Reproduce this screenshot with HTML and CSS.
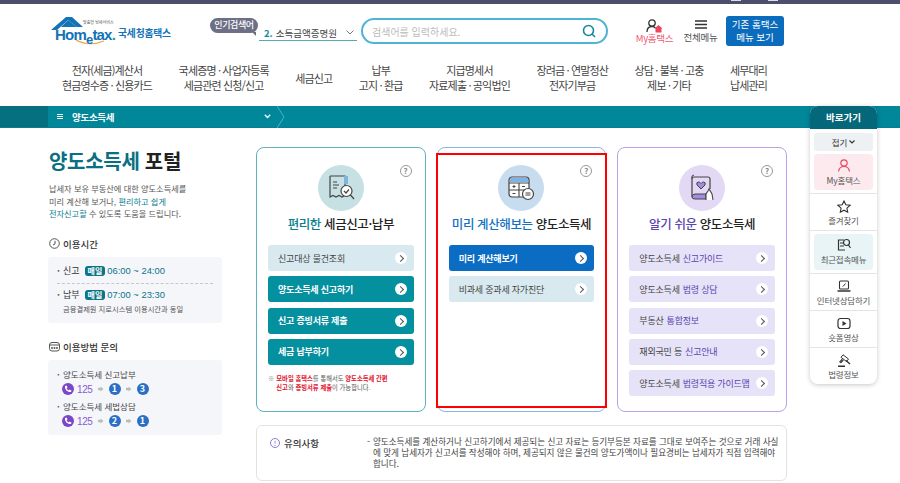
FILE: index.html
```html
<!DOCTYPE html>
<html lang="ko">
<head>
  <meta charset="UTF-8" />
  <title>양도소득세 포털</title>
  <link rel="stylesheet" href="styles.css">
</head>
<body>

<div class="topbar"><i></i><i></i></div>

<!-- 헤더 -->
<div class="header">
  <div class="head-row">
    <div class="logo">
      <svg class="logo-roof" width="32" height="16" viewBox="0 0 32 16"><path d="M0 13 L15 0 L21 0 L32 10 L26 10 L17 3 L6 13 Z" fill="#1273b9"/><path d="M17 3 L26 10 L10 10 Z" fill="#1273b9"/></svg>
      <svg class="logo-smile" width="30" height="7" viewBox="0 0 30 7"><path d="M1 1 Q14 8 29 2" fill="none" stroke="#f0a23c" stroke-width="1.2"/></svg>
      <span class="logo-sub">맞춤형 납세서비스</span>
      <span class="logo-en">Hom<em>e</em>tax<b>.</b></span>
      <span class="logo-ko">국세청홈택스</span>
    </div>
    <div class="hot">인기검색어</div>
    <div class="rolling"><b>2.</b> 소득금액증명원
      <svg width="8" height="5" viewBox="0 0 8 5"><path d="M.5 .5 L4 4 L7.5 .5" fill="none" stroke="#777" stroke-width="1"/></svg>
    </div>
    <div class="search">
      <span>검색어를 입력하세요.</span>
      <svg width="14" height="14" viewBox="0 0 14 14"><circle cx="6.5" cy="6.5" r="5" fill="none" stroke="#12899c" stroke-width="1.6"/><path d="M10 10 L13 13" stroke="#12899c" stroke-width="1.6"/></svg>
    </div>
    <div class="head-link my">
      <svg width="17" height="14" viewBox="0 0 17 14"><circle cx="6" cy="4" r="3.2" fill="none" stroke="#333" stroke-width="1.3"/><path d="M1 13 C1 9 3 7.5 6 7.5 C7.5 7.5 8.5 8 9.5 9" fill="none" stroke="#333" stroke-width="1.3"/><path d="M8.5 9.5 L12.5 6 L16.5 9.5 L15.5 9.5 L15.5 13.5 L9.5 13.5 L9.5 9.5 Z" fill="#e8475f"/></svg>
      <span>My홈택스</span>
    </div>
    <div class="head-link all">
      <svg width="12" height="9" viewBox="0 0 12 9"><path d="M0 1 H12 M0 4.5 H12 M0 8 H12" stroke="#333" stroke-width="1.3"/></svg>
      <span>전체메뉴</span>
    </div>
    <div class="old-btn">기존 홈택스<br>메뉴 보기</div>
  </div>
  <div class="nav">
    <a>전자(세금)계산서<br>현금영수증 · 신용카드</a>
    <a>국세증명 · 사업자등록<br>세금관련 신청/신고</a>
    <a>세금신고</a>
    <a>납부<br>고지 · 환급</a>
    <a>지급명세서<br>자료제출 · 공익법인</a>
    <a>장려금 · 연말정산<br>전자기부금</a>
    <a>상담 · 불복 · 고충<br>제보 · 기타</a>
    <a>세무대리<br>납세관리</a>
  </div>
</div>

<!-- 경로 바 -->
<div class="crumb">
  <div class="crumb-side"></div>
  <div class="crumb-item">
    <span class="crumb-ham"></span>
    <b>양도소득세</b>
    <svg class="crumb-arrow" width="7" height="5" viewBox="0 0 7 5"><path d="M.8 .8 L3.5 3.5 L6.2 .8" fill="none" stroke="#fff" stroke-width="1.3"/></svg>
  </div>
  <svg width="8" height="22" viewBox="0 0 8 22"><path d="M0 0 L7 11 L0 22" fill="none" stroke="#4fb0bd" stroke-width="1"/></svg>
</div>

<div class="main">
  <!-- 왼쪽 -->
  <div class="left">
    <h1><span>양도소득세</span> 포털</h1>
    <p class="desc">납세자 보유 부동산에 대한 양도소득세를<br>미리 계산해 보거나, <span>편리하고 쉽게</span><br><span>전자신고할</span> 수 있도록 도움을 드립니다.</p>

    <h4 class="side-head">
      <svg width="11" height="11" viewBox="0 0 11 11"><circle cx="5.5" cy="5.5" r="4.8" fill="none" stroke="#555" stroke-width="1"/><path d="M6 2.8 V6 L4 7" fill="none" stroke="#555" stroke-width="1"/></svg>
      이용시간
    </h4>
    <div class="side-box time-box">
      <div class="time-row"><span class="dot">·</span><b>신고</b><em>매일</em><span class="time">06:00 ~ 24:00</span></div>
      <div class="time-line"></div>
      <div class="time-row"><span class="dot">·</span><b>납부</b><em>매일</em><span class="time">07:00 ~ 23:30</span></div>
      <div class="time-sub">금융결제원 지로시스템 이용시간과 동일</div>
    </div>

    <h4 class="side-head">
      <svg width="11" height="11" viewBox="0 0 11 11"><rect x=".5" y="1.5" width="10" height="8.5" rx="2.5" fill="none" stroke="#555" stroke-width="1"/><path d="M.5 4 H10.5" stroke="#555"/><circle cx="3" cy="7" r="1" fill="#555"/><circle cx="5.5" cy="7" r="1" fill="#555"/><circle cx="8" cy="7" r="1" fill="#555"/></svg>
      이용방법 문의
    </h4>
    <div class="side-box call-box">
      <div class="call-name"><span class="dot">·</span>양도소득세 신고납부</div>
      <div class="call-row">
        <span class="phone"><svg width="8" height="8" viewBox="0 0 8 8"><path d="M1 1 L2.5 .5 L3.5 2.5 L2.6 3.2 C3 4.2 3.8 5 4.8 5.4 L5.5 4.5 L7.5 5.5 L7 7 C3.5 7.5 .5 4.5 1 1 Z" fill="#fff"/></svg></span>
        <span class="call-no">125</span><i class="next"></i><span class="num">1</span><i class="next"></i><span class="num">3</span>
      </div>
      <div class="call-name"><span class="dot">·</span>양도소득세 세법상담</div>
      <div class="call-row">
        <span class="phone"><svg width="8" height="8" viewBox="0 0 8 8"><path d="M1 1 L2.5 .5 L3.5 2.5 L2.6 3.2 C3 4.2 3.8 5 4.8 5.4 L5.5 4.5 L7.5 5.5 L7 7 C3.5 7.5 .5 4.5 1 1 Z" fill="#fff"/></svg></span>
        <span class="call-no">125</span><i class="next"></i><span class="num">2</span><i class="next"></i><span class="num">1</span>
      </div>
    </div>
  </div>

  <!-- 오른쪽 카드 -->
  <div class="right">
    <div class="cards">
      <div class="card card-teal">
        <span class="help">?</span>
        <div class="circle">
          <svg width="28" height="28" viewBox="0 0 28 28"><path d="M3 2 H18 V17 M3 2 V23 L6 21.5 L9 23 L12 21.5 L15 23 L17 22" fill="none" stroke="#444" stroke-width="1.2"/><path d="M6 8 H10 M6 11 H12 M6 14 H10" stroke="#444" stroke-width="1.1"/><path d="M17 2 H21 V10 H17 Z" fill="#7db6d8"/><circle cx="19.5" cy="17" r="5.5" fill="#fff" stroke="#444" stroke-width="1.2"/><path d="M17 17 L19 19 L22 15.5 M23.5 21 L27 25" fill="none" stroke="#444" stroke-width="1.2"/></svg>
        </div>
        <h3><span>편리한</span> 세금신고·납부</h3>
        <div class="links">
          <a class="lnk lnk-pale">신고대상 물건조회<i></i></a>
          <a class="lnk lnk-teal">양도소득세 신고하기<i></i></a>
          <a class="lnk lnk-teal">신고 증빙서류 제출<i></i></a>
          <a class="lnk lnk-teal">세금 납부하기<i></i></a>
        </div>
        <p class="card-note"><span class="mark">※</span><span><u>모바일 홈택스</u>를 통해서도 <u>양도소득세 간편<br>신고</u>와 <u>증빙서류 제출</u>이 가능합니다.</span></p>
      </div>

      <div class="card card-blue">
        <span class="help">?</span>
        <div class="circle">
          <svg width="28" height="28" viewBox="0 0 28 28"><rect x="2" y="3" width="20" height="20" rx="3" fill="#fff" stroke="#444" stroke-width="1.2"/><path d="M3 4 H21 V8 H3 Z" fill="#7db3e6"/><path d="M2 9 H22 M12 9 V23 M2 16 H22" stroke="#444" stroke-width="1.1"/><path d="M5.5 12.5 H8.5 M7 11 V14 M15 12.5 H18 M5.5 19.5 H8.5" stroke="#444" stroke-width="1"/><circle cx="21" cy="20" r="5.5" fill="#fff" stroke="#444" stroke-width="1.2"/><path d="M18.5 19 H23.5 M18.5 21 H23.5" stroke="#444" stroke-width="1"/></svg>
        </div>
        <h3><span>미리 계산해보는</span> 양도소득세</h3>
        <div class="links">
          <a class="lnk lnk-blue">미리 계산해보기<i></i></a>
          <a class="lnk lnk-pale">비과세 중과세 자가진단<i></i></a>
        </div>
        <div class="red-box"></div>
      </div>

      <div class="card card-purple">
        <span class="help">?</span>
        <div class="circle">
          <svg width="28" height="28" viewBox="0 0 28 28"><path d="M4 23 V5 Q4 3 6 3 H20 Q22 3 22 5 V15" fill="none" stroke="#444" stroke-width="1.2"/><path d="M4 23 Q4 20 7 20 H18 V25 H7 Q4 25 4 23 Z" fill="#a68be0" stroke="#444" stroke-width="1"/><path d="M6 1 Q3 1 4 5" fill="none" stroke="#444"/><path d="M13 15 L9 11 Q8 8 10.5 8 Q12 8 13 9.5 Q14 8 15.5 8 Q18 8 17 11 Z" fill="#a68be0" stroke="#444" stroke-width="1"/><path d="M18 26 V20 L20 17 L21 15 L24 20 L25 26" fill="#fff" stroke="#444" stroke-width="1.1"/></svg>
        </div>
        <h3><span>알기 쉬운</span> 양도소득세</h3>
        <div class="links">
          <a class="lnk lnk-lav">양도소득세 <span>신고가이드</span><i></i></a>
          <a class="lnk lnk-lav">양도소득세 <span>법령 상담</span><i></i></a>
          <a class="lnk lnk-lav">부동산 <span>통합정보</span><i></i></a>
          <a class="lnk lnk-lav">재외국민 등 <span>신고안내</span><i></i></a>
          <a class="lnk lnk-lav">양도소득세 <span>법령적용 가이드맵</span><i></i></a>
        </div>
      </div>
    </div>

    <div class="notice">
      <div class="notice-label"><span class="info">!</span>유의사항</div>
      <div class="notice-text"><span>-</span><p>양도소득세를 계산하거나 신고하기에서 제공되는 신고 자료는 등기부등본 자료를 그대로 보여주는 것으로 거래 사실에 맞게 납세자가 신고서를 작성해야 하며, 제공되지 않은 물건의 양도가액이나 필요경비는 납세자가 직접 입력해야 합니다.</p></div>
    </div>
  </div>
</div>

<!-- 바로가기 -->
<div class="quick">
  <div class="quick-head">바로가기</div>
  <div class="quick-fold">접기
    <svg width="6" height="4" viewBox="0 0 6 4"><path d="M.5 .5 L3 3 L5.5 .5" fill="none" stroke="#333" stroke-width="1.1"/></svg>
  </div>
  <div class="quick-item q-pink">
    <svg width="14" height="13" viewBox="0 0 14 13"><circle cx="7" cy="4" r="3.2" fill="none" stroke="#e8475f" stroke-width="1.2"/><path d="M1.5 12.5 C2 9 4 7.5 7 7.5 C10 7.5 12 9 12.5 12.5" fill="none" stroke="#e8475f" stroke-width="1.2"/></svg>
    <span>My홈택스</span>
  </div>
  <div class="quick-sep"></div>
  <div class="quick-item">
    <svg width="14" height="13" viewBox="0 0 14 13"><path d="M7 1 L8.8 4.8 L13 5.3 L9.9 8.1 L10.7 12.2 L7 10.2 L3.3 12.2 L4.1 8.1 L1 5.3 L5.2 4.8 Z" fill="none" stroke="#333" stroke-width="1.1"/></svg>
    <span>즐겨찾기</span>
  </div>
  <div class="quick-sep"></div>
  <div class="quick-item q-mint">
    <svg width="14" height="13" viewBox="0 0 14 13"><path d="M8 12 H1.5 V2 H7" fill="none" stroke="#333" stroke-width="1.2"/><path d="M3 5 H6 M3 8 H7" stroke="#333"/><circle cx="9.5" cy="4.5" r="3" fill="none" stroke="#333" stroke-width="1.2"/><path d="M11.5 7 L13.5 10" stroke="#333" stroke-width="1.2"/></svg>
    <span>최근접속메뉴</span>
  </div>
  <div class="quick-sep"></div>
  <div class="quick-item">
    <svg width="14" height="13" viewBox="0 0 14 13"><rect x="2.5" y="1" width="9" height="8" rx="1" fill="none" stroke="#333" stroke-width="1.1"/><path d="M.5 11 H13.5" stroke="#333" stroke-width="1.4"/><path d="M6 6.5 L8.5 3.5" stroke="#333"/></svg>
    <span>인터넷상담하기</span>
  </div>
  <div class="quick-sep"></div>
  <div class="quick-item">
    <svg width="14" height="13" viewBox="0 0 14 13"><rect x="1" y="1.5" width="12" height="10" rx="2.5" fill="none" stroke="#333" stroke-width="1.2"/><path d="M5.5 4 L9.5 6.5 L5.5 9 Z" fill="#333"/></svg>
    <span>숏폼영상</span>
  </div>
  <div class="quick-sep"></div>
  <div class="quick-item">
    <svg width="14" height="13" viewBox="0 0 14 13"><path d="M6 .8 L11.5 5 L9.5 7.5 L4 3.3 Z" fill="#fff" stroke="#333"/><path d="M5 5 L2.5 8 L4 9 L6.5 6.3" fill="#555" stroke="#333" stroke-width=".8"/><path d="M9 6.5 L13 10" stroke="#333" stroke-width="1.4"/><path d="M1 12.3 H8" stroke="#333" stroke-width="1.4"/></svg>
    <span>법령정보</span>
  </div>
</div>

</body>
</html>
```

FILE: styles.css
```css
* { box-sizing: border-box; }
html, body { height: 483px; overflow: hidden; }
body { margin: 0; position: relative; background: #fff; color: #333; font-family: "Noto Sans CJK KR", "Noto Sans", sans-serif; font-size: 10px; }
h1, h3, h4, p { margin: 0; }
svg { display: block; flex: none; }

.topbar { height: 4px; background: #4b4e6d; display: flex; gap: 27px; padding-left: 731px; }
.topbar i { width: 10px; height: 1px; background: #ddd; }

/* 헤더 */
.header { height: 102px; }
.head-row { display: flex; align-items: flex-start; padding: 12px 0 0 50px; height: 52px; }
.logo { position: relative; width: 121px; height: 30px; margin-top: 1px; }
.logo-roof { position: absolute; left: 1px; top: 0; }
.logo-smile { position: absolute; left: 25px; top: 22px; }
.logo-sub { position: absolute; left: 33px; top: 2px; font-size: 4px; color: #555; white-space: nowrap; }
.logo-en { position: absolute; left: 5px; top: 9px; font: bold 15px/18px "Liberation Sans", sans-serif; letter-spacing: -.8px; color: #1273b9; white-space: nowrap; }
.logo-en em { font-style: normal; font-size: 13px; position: relative; top: 4px; }
.logo-en b { color: #12a08a; }
.logo-ko { position: absolute; left: 68px; top: 9px; font-size: 9.8px; font-weight: 700; color: #1273b9; letter-spacing: -.2px; white-space: nowrap; }

.hot { position: relative; margin: 2px 0 0 39px; width: 48px; height: 15px; background: #6c6f86; border-radius: 8px; color: #fff; font-size: 9px; font-weight: 500; line-height: 14px; text-align: center; letter-spacing: -.4px; }
.hot::after { content: ""; position: absolute; right: 2px; bottom: -3px; border-top: 4px solid #6c6f86; border-left: 4px solid transparent; }
.rolling { display: flex; align-items: center; gap: 3px; width: 98px; height: 16px; margin: 9px 0 0 1px; padding-left: 5px; border-bottom: 1px solid #5aa9b6; font-size: 9.5px; color: #444; line-height: 14px; white-space: nowrap; }
.rolling b { color: #12899c; }
.rolling svg { margin-left: auto; margin-right: 3px; }
.search { display: flex; align-items: center; justify-content: space-between; width: 247px; height: 26px; margin: 2px 0 0 4px; padding: 0 10px 0 9px; border: 2px solid #4fb3d4; border-radius: 13px; color: #bbb; font-size: 10px; }
.head-link { display: flex; flex-direction: column; align-items: center; white-space: nowrap; font-size: 9.5px; letter-spacing: -.3px; }
.head-link span { line-height: 10px; }
.my { width: 39px; margin: 3px 0 0 27px; color: #ef5a72; }
.all { width: 35px; margin: 4px 0 0 9px; color: #555; gap: 3px; }
.old-btn { width: 58px; height: 30px; margin: 0 0 0 8px; background: #0b6cbd; border-radius: 3px; color: #fff; font-size: 9.5px; line-height: 13px; text-align: center; padding-top: 2px; }

.nav { display: flex; align-items: center; gap: 26.5px; padding-left: 62px; height: 32px; margin-top: 6px; }
.nav a { font-size: 11px; line-height: 15px; color: #444; text-align: center; white-space: nowrap; letter-spacing: -.85px; }

/* 경로 바 */
.crumb { display: flex; height: 22px; background: #00879a; border-bottom: 1px solid #0a7d8e; }
.crumb-side { width: 48px; background: #05707f; }
.crumb-item { display: flex; align-items: center; width: 229px; padding-left: 9px; color: #fff; }
.crumb-item b { font-size: 9.5px; font-weight: 700; margin-left: 9px; letter-spacing: -.3px; }
.crumb-ham { width: 6px; height: 5px; border-top: 1px solid #fff; border-bottom: 1px solid #fff; position: relative; }
.crumb-ham::after { content: ""; display: block; height: 1px; margin-top: 1px; background: #fff; }
.crumb-arrow { margin-left: auto; margin-right: 6px; }

/* 본문 */
.main { display: flex; padding: 19px 0 0 48px; }
.left { width: 174px; margin-right: 34px; }
h1 { font-size: 20px; line-height: 28px; font-weight: 700; color: #222; letter-spacing: -.3px; padding-left: 1px; }
h1 span { color: #0a6f82; }
.desc { margin-top: 7px; padding-left: 1px; font-size: 8.2px; line-height: 12.5px; color: #555; white-space: nowrap; }
.desc span { color: #0a7d8e; }
.side-head { display: flex; align-items: center; gap: 3px; margin: 16px 0 5px; font-size: 9.5px; line-height: 16px; font-weight: 500; color: #333; padding-left: 1px; }
.side-box { background: #f5f6fa; border-radius: 3px; padding: 0 9px; }
.time-box { height: 66px; padding-top: 6px; }
.time-row { display: flex; align-items: center; height: 16px; font-size: 9px; }
.dot { width: 6px; color: #555; font-weight: 700; }
.time-row b { font-weight: 400; color: #333; }
.time-row em { font-style: normal; background: #0a7488; color: #fff; font-size: 8px; font-weight: 700; line-height: 10px; padding: 0 3px; border-radius: 3px; margin: 0 2px 0 5px; }
.time { color: #0a7488; font-size: 9.4px; font-family: "Liberation Sans", sans-serif; }
.time-line { border-top: 1px dashed #c5c7cc; margin: 4px 0 3px; }
.time-sub { font-size: 7.3px; line-height: 11px; padding: 1px 0 0 6px; color: #555; white-space: nowrap; }
.call-box { height: 75px; padding-top: 7px; }
.call-name { display: flex; font-size: 8.5px; line-height: 14px; color: #444; }
.call-row { display: flex; align-items: center; gap: 3px; height: 17px; padding-left: 5px; margin-bottom: 1px; }
.phone { width: 12px; height: 12px; display: flex; align-items: center; justify-content: center; border-radius: 50%; background: #7c46c6; }
.call-no { color: #8a5ccf; font-size: 10px; font-family: "Liberation Sans", sans-serif; letter-spacing: -.4px; }
.next { width: 6px; height: 5px; margin: 0 2px; background: #bbb; clip-path: polygon(0 25%, 50% 25%, 50% 0, 100% 50%, 50% 100%, 50% 75%, 0 75%); }
.num { width: 12px; height: 12px; border-radius: 50%; background: #2a6fc4; color: #fff; font-size: 9px; font-weight: 700; line-height: 12px; text-align: center; }

.right { width: 531px; }
.cards { display: grid; grid-template-columns: repeat(3, minmax(0, 1fr)); gap: 11px; }
.card { position: relative; height: 265px; padding: 17px 11px 0; border: 1px solid #5fb1bd; border-radius: 8px; }
.card-blue { border-color: #8db4e0; }
.card-purple { border-color: #b9a2e6; }
.help { position: absolute; right: 13px; top: 17px; width: 12px; height: 12px; border: 1px solid #999; border-radius: 50%; color: #888; font-size: 8px; font-weight: 700; line-height: 10px; text-align: center; }
.circle { width: 46px; height: 46px; margin: 0 auto; display: flex; align-items: center; justify-content: center; border-radius: 50%; background: #c6e0e4; }
.card-blue .circle { background: #c8dcf0; }
.card-purple .circle { background: #e3d9f5; }
h3 { margin-top: 3px; font-size: 12.5px; line-height: 20px; font-weight: 500; text-align: center; color: #222; white-space: nowrap; letter-spacing: -.4px; }
.card-teal h3 span { color: #0a7d8e; }
.card-blue h3 span { color: #1273c4; }
.card-purple h3 span { color: #5a45b0; }
.links { display: flex; flex-direction: column; gap: 5.3px; margin-top: 11px; }
.lnk { display: flex; align-items: center; justify-content: space-between; height: 26px; padding: 0 7px 0 10px; border-radius: 3px; font-size: 9px; letter-spacing: -.2px; white-space: nowrap; }
.lnk i { width: 12px; height: 12px; flex: none; border-radius: 50%; background: #fff; position: relative; }
.lnk i::after { content: ""; position: absolute; left: 3px; top: 4px; width: 4px; height: 4px; border-top: 1px solid #555; border-right: 1px solid #555; transform: rotate(45deg); }
.lnk-pale { background: #d9e9f0; color: #444; }
.lnk-teal { background: #05909f; color: #fff; font-weight: 700; }
.lnk-blue { background: #0a6cc2; color: #fff; font-weight: 700; }
.lnk-lav { background: #e6e2f7; color: #444; }
.lnk-lav span { color: #5a45b0; margin-right: auto; padding-left: 3px; }
.card-note { display: flex; gap: 2px; margin: 9px 0 0; font-size: 6.3px; line-height: 9px; color: #555; white-space: nowrap; }
.card-note u { text-decoration: none; color: #e3122d; font-weight: 700; }
.mark { color: #888; }
.red-box { position: absolute; left: -2px; right: -2px; top: 5px; bottom: 3px; border: 2px solid #f00; }

.notice { display: flex; height: 56px; margin-top: 13px; padding: 10px 7px 0 13px; border: 1px solid #e2e2e2; border-radius: 6px; }
.notice-label { display: flex; align-items: flex-start; gap: 4px; width: 97px; font-size: 9.5px; line-height: 14px; font-weight: 500; color: #333; }
.info { width: 10px; height: 10px; margin-top: 2px; border: 1px solid #8a7ad8; border-radius: 50%; color: #8a7ad8; font-size: 7px; line-height: 8px; text-align: center; }
.notice-text { display: flex; gap: 3px; flex: 1; font-size: 8.6px; line-height: 11px; color: #444; }
.notice-text p { letter-spacing: -.05px; }

/* 바로가기 */
.quick { position: absolute; left: 810px; top: 106px; width: 67px; height: 278px; background: #fff; border-radius: 8px; box-shadow: 0 1px 5px rgba(0,0,0,.22); overflow: hidden; }
.quick-head { height: 23px; background: #05687a; color: #fff; font-size: 9.5px; font-weight: 700; line-height: 22px; text-align: center; }
.quick-fold { display: flex; align-items: center; justify-content: center; gap: 2px; height: 18px; margin: 4px 4px 3px; background: #eef1f3; border-radius: 3px; font-size: 8.5px; }
.quick-item { display: flex; flex-direction: column; align-items: center; gap: 2px; height: 36px; margin: 0 4px; padding-top: 6px; border-radius: 4px; font-size: 8.5px; line-height: 11px; color: #555; white-space: nowrap; letter-spacing: -.2px; }
.q-pink { background: #fdeaee; margin-bottom: 3px; padding-top: 5px; gap: 3px; }
.q-mint { background: #e8f4f6; margin: 3px 4px; padding-top: 4px; gap: 3px; }
.quick-sep { height: 1px; background: #e4e4e4; }
```
